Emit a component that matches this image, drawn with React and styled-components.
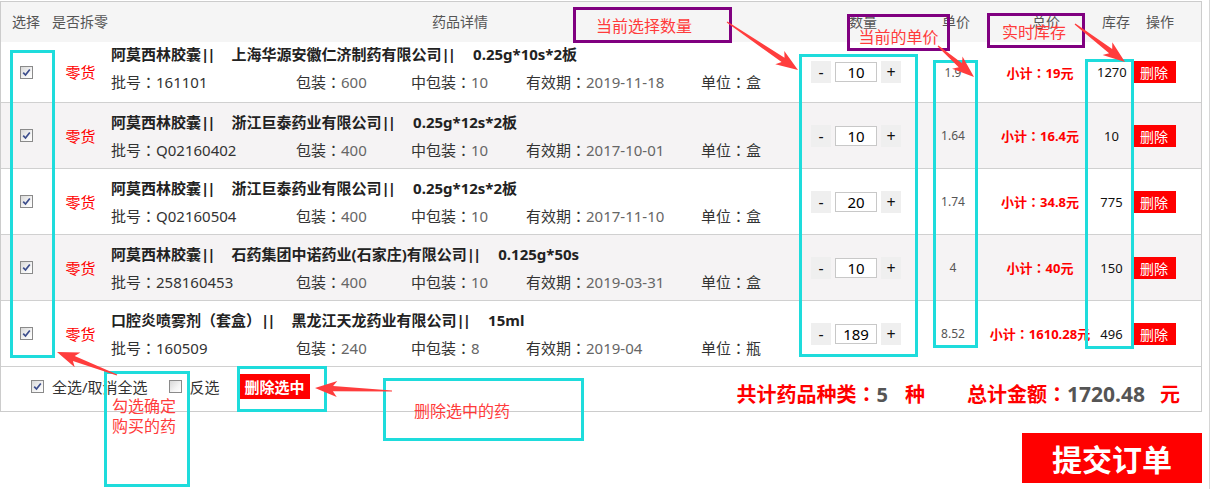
import React from "react";
import styled, { createGlobalStyle } from "styled-components";

const GlobalStyle = createGlobalStyle`
  html, body { margin: 0; padding: 0; background: #fff; }
  body { font-family: "Noto Sans", "Noto Sans CJK SC", sans-serif; color: #333; }
  * { box-sizing: border-box; }
`;

const COLS = "51px 59px 689px 123px 60px 114px 29px 1fr";

const Page = styled.div`
  position: relative;
  width: 1210px;
  height: 489px;
  padding-top: 1px;
  border-right: 1px solid #d6d6d6;
  overflow: hidden;
`;

const Table = styled.div`
  width: 1202px;
  border: 1px solid #cccccc;
`;

const HeaderRow = styled.div`
  display: grid;
  grid-template-columns: ${COLS};
  align-items: center;
  height: 40px;
  background: #f5f5f5;
  font-size: 14px;
  line-height: 20px;
  color: #555;
`;

const HeadCell = styled.div`
  padding-left: ${(p) => p.$pl}px;
  white-space: nowrap;
`;

const Row = styled.div`
  display: grid;
  grid-template-columns: ${COLS};
  align-items: center;
  height: ${(p) => (p.$first ? 61 : 66)}px;
  border-bottom: 1px solid #d0d0d0;
  background: ${(p) => (p.$alt ? "#f5f3f4" : "#ffffff")};
`;

const CheckCell = styled.div`
  display: flex;
  justify-content: center;
`;

const BoxCheck = styled.span`
  display: inline-flex;
  align-items: center;
  justify-content: center;
  width: 13px;
  height: 13px;
  border: 1px solid #8a8a8a;
  background: linear-gradient(135deg, #d8d8d8 0%, #f4f4f4 60%, #ffffff 100%);
  flex: none;
`;

const LooseCell = styled.div`
  text-align: center;
  color: #ff0000;
  font-size: 15px;
  line-height: 20px;
  padding-right: 2px;
`;

const Details = styled.div`
  margin-top: ${(p) => (p.$first ? -8 : 0)}px;
  white-space: nowrap;
`;

const Title = styled.div`
  font-size: 15px;
  line-height: 28px;
  font-weight: 700;
  color: #222;
`;

const Bars = styled.span`
  letter-spacing: -2px;
  margin-right: 2px;
`;

const Sep = styled.span`
  margin-left: ${(p) => p.$gap}px;
`;

/* centred full-width colon, as in the original font */
const Colon = styled.span`
  font-family: "Noto Sans CJK TC", "Noto Sans CJK SC", sans-serif;
`;

const Info = styled.div`
  display: grid;
  grid-template-columns: 185px 115px 115px 175px auto;
  font-size: 15px;
  line-height: 28px;
  color: #333;
`;

const Val = styled.span`
  color: ${(p) => (p.$dark ? "#333" : "#666")};
`;

const QtyCell = styled.div`
  display: flex;
  align-items: center;
  gap: 4px;
  padding-left: 11px;
`;

const StepBtn = styled.span`
  display: flex;
  align-items: center;
  justify-content: center;
  width: 20px;
  height: 22px;
  background: #efefef;
  color: #111;
  font-size: 16px;
  line-height: 1;
`;

const QtyInput = styled.input`
  width: 42px;
  height: 20px;
  padding: 0;
  border: 1px solid #c8c8c8;
  background: #fff;
  text-align: center;
  font-family: "Noto Sans", sans-serif;
  font-size: 15px;
  color: #000;
  outline: none;
`;

const PriceCell = styled.div`
  text-align: center;
  font-size: 12px;
  color: #555;
`;

const SubCell = styled.div`
  text-align: center;
  font-size: 13px;
  font-weight: 700;
  color: #ff0000;
  white-space: nowrap;
`;

const StockCell = styled.div`
  text-align: center;
  font-size: 13px;
  color: #111;
`;

const OpCell = styled.div`
  padding-left: 5px;
`;

const DelBtn = styled.span`
  display: flex;
  align-items: center;
  justify-content: center;
  width: 45px;
  height: 22px;
  background: #ff0000;
  border-left: 1px solid #9a0000;
  color: #fff;
  font-size: 14px;
`;

const Footer = styled.div`
  display: flex;
  align-items: center;
  height: 44px;
  padding: 0 21px 0 30px;
`;

const FootLeft = styled.div`
  display: flex;
  align-items: center;
  margin-top: -6px;
`;

const FootLabel = styled.span`
  margin-left: 8px;
  margin-right: ${(p) => p.$mr}px;
  font-size: 15px;
  color: #333;
  white-space: nowrap;
`;

const DelSelected = styled.span`
  display: flex;
  align-items: center;
  justify-content: center;
  width: 70px;
  height: 25px;
  background: #ff0000;
  color: #fff;
  font-size: 15px;
  font-weight: 700;
`;

const Summary = styled.div`
  display: flex;
  align-items: baseline;
  margin-left: auto;
  margin-top: 8px;
  font-size: 20px;
  font-weight: 700;
  color: #ff0000;
  white-space: nowrap;
`;

const Num = styled.span`
  color: #555;
  font-size: ${(p) => p.$size || 20}px;
`;

const Unit = styled.span`
  margin-left: ${(p) => p.$ml}px;
  margin-right: ${(p) => p.$mr || 0}px;
`;

const SubmitBar = styled.div`
  display: flex;
  justify-content: flex-end;
  width: 1202px;
  margin-top: 21px;
`;

const SubmitBtn = styled.div`
  display: flex;
  align-items: center;
  justify-content: center;
  width: 180px;
  height: 50px;
  background: #ff0000;
  color: #fff;
  font-size: 30px;
  font-weight: 700;
`;

/* ---------- annotation overlay ---------- */
const Overlay = styled.div`
  position: absolute;
  inset: 0;
  pointer-events: none;
`;

const Mark = styled.div`
  position: absolute;
  left: ${(p) => p.$x}px;
  top: ${(p) => p.$y}px;
  width: ${(p) => p.$w}px;
  height: ${(p) => p.$h}px;
  border: 3px solid ${(p) => (p.$purple ? "#800080" : "#1edcdc")};
  display: flex;
  flex-direction: column;
  align-items: ${(p) => (p.$center ? "center" : "flex-start")};
  justify-content: ${(p) => (p.$top ? "flex-start" : "center")};
  padding: ${(p) => p.$pad || "0"};
`;

const Note = styled.div`
  font-family: "Noto Sans CJK SC", sans-serif;
  font-size: 16px;
  line-height: 20px;
  color: #ff3b3b;
  white-space: nowrap;
`;

const ArrowLayer = styled.svg`
  position: absolute;
  left: 0;
  top: 0;
`;

function arrowPoints(x1, y1, x2, y2) {
  const dx = x2 - x1;
  const dy = y2 - y1;
  const len = Math.hypot(dx, dy);
  const ux = dx / len;
  const uy = dy / len;
  const nx = -uy;
  const ny = ux;
  const H = 20;
  const W = 8;
  const bx = x2 - ux * H;
  const by = y2 - uy * H;
  const pts = [
    [x1 + nx * 0.6, y1 + ny * 0.6],
    [bx + ux * 2 + nx * 2.6, by + uy * 2 + ny * 2.6],
    [bx - ux * 2 + nx * W, by - uy * 2 + ny * W],
    [x2, y2],
    [bx - ux * 2 - nx * W, by - uy * 2 - ny * W],
    [bx + ux * 2 - nx * 2.6, by + uy * 2 - ny * 2.6],
    [x1 - nx * 0.6, y1 - ny * 0.6],
  ];
  return pts.map((p) => p.map((v) => v.toFixed(1)).join(",")).join(" ");
}

const ARROWS = [
  [727, 22, 798, 70],
  [938, 46, 974, 77],
  [1075, 24, 1125, 62],
  [117, 375, 57, 352],
  [392, 391, 315, 388],
];

function Checkbox({ checked }) {
  return (
    <BoxCheck>
      {checked && (
        <svg width="9" height="9" viewBox="0 0 9 9">
          <path d="M1.2 4.6 L3.5 7 L7.8 1.5" fill="none" stroke="#3c4d8c" strokeWidth="1.7" />
        </svg>
      )}
    </BoxCheck>
  );
}

const ROWS = [
  { name: "阿莫西林胶囊", co: "上海华源安徽仁济制药有限公司", spec: "0.25g*10s*2板", batch: "161101", pack: "600", mid: "10", exp: "2019-11-18", unit: "盒", qty: "10", price: "1.9", sub: "19", stock: "1270" },
  { name: "阿莫西林胶囊", co: "浙江巨泰药业有限公司", spec: "0.25g*12s*2板", batch: "Q02160402", pack: "400", mid: "10", exp: "2017-10-01", unit: "盒", qty: "10", price: "1.64", sub: "16.4", stock: "10" },
  { name: "阿莫西林胶囊", co: "浙江巨泰药业有限公司", spec: "0.25g*12s*2板", batch: "Q02160504", pack: "400", mid: "10", exp: "2017-11-10", unit: "盒", qty: "20", price: "1.74", sub: "34.8", stock: "775" },
  { name: "阿莫西林胶囊", co: "石药集团中诺药业(石家庄)有限公司", spec: "0.125g*50s", batch: "258160453", pack: "400", mid: "10", exp: "2019-03-31", unit: "盒", qty: "10", price: "4", sub: "40", stock: "150" },
  { name: "口腔炎喷雾剂（套盒）", co: "黑龙江天龙药业有限公司", spec: "15ml", batch: "160509", pack: "240", mid: "8", exp: "2019-04", unit: "瓶", qty: "189", price: "8.52", sub: "1610.28", stock: "496" },
];

export default function App() {
  return (
    <Page>
      <GlobalStyle />
      <Table>
        <HeaderRow>
          <HeadCell $pl={11}>选择</HeadCell>
          <HeadCell $pl={0}>是否拆零</HeadCell>
          <HeadCell $pl={321}>药品详情</HeadCell>
          <HeadCell $pl={49}>数量</HeadCell>
          <HeadCell $pl={19}>单价</HeadCell>
          <HeadCell $pl={49}>总价</HeadCell>
          <HeadCell $pl={5}>库存</HeadCell>
          <HeadCell $pl={20}>操作</HeadCell>
        </HeaderRow>
        {ROWS.map((r, i) => (
          <Row key={i} $first={i === 0} $alt={i % 2 === 1}>
            <CheckCell>
              <Checkbox checked />
            </CheckCell>
            <LooseCell>零货</LooseCell>
            <Details $first={i === 0}>
              <Title>
                {r.name}<Bars>||</Bars>
                <Sep $gap={16}>{r.co}<Bars>||</Bars></Sep>
                <Sep $gap={17}>{r.spec}</Sep>
              </Title>
              <Info>
                <span>批号<Colon>：</Colon><Val $dark>{r.batch}</Val></span>
                <span>包装<Colon>：</Colon><Val>{r.pack}</Val></span>
                <span>中包装<Colon>：</Colon><Val>{r.mid}</Val></span>
                <span>有效期<Colon>：</Colon><Val>{r.exp}</Val></span>
                <span>单位<Colon>：</Colon>{r.unit}</span>
              </Info>
            </Details>
            <QtyCell>
              <StepBtn>-</StepBtn>
              <QtyInput defaultValue={r.qty} readOnly />
              <StepBtn>+</StepBtn>
            </QtyCell>
            <PriceCell>{r.price}</PriceCell>
            <SubCell>小计<Colon>：</Colon>{r.sub}元</SubCell>
            <StockCell>{r.stock}</StockCell>
            <OpCell>
              <DelBtn>删除</DelBtn>
            </OpCell>
          </Row>
        ))}
        <Footer>
          <FootLeft>
            <Checkbox checked />
            <FootLabel $mr={21}>全选/取消全选</FootLabel>
            <Checkbox />
            <FootLabel $mr={20}>反选</FootLabel>
            <DelSelected>删除选中</DelSelected>
          </FootLeft>
          <Summary>
            共计药品种类<Colon>：</Colon><Num>5</Num>
            <Unit $ml={17} $mr={42}>种</Unit>
            总计金额<Colon>：</Colon><Num $size={21}>1720.48</Num>
            <Unit $ml={15}>元</Unit>
          </Summary>
        </Footer>
      </Table>
      <SubmitBar>
        <SubmitBtn>提交订单</SubmitBtn>
      </SubmitBar>

      <Overlay>
        <Mark $x={10} $y={50} $w={45} $h={308} />
        <Mark $x={799} $y={54} $w={119} $h={303} />
        <Mark $x={933} $y={60} $w={45} $h={288} />
        <Mark $x={1085} $y={59} $w={49} $h={290} />
        <Mark $x={237} $y={366} $w={90} $h={46} />
        <Mark $x={104} $y={371} $w={86} $h={116} $top $pad="21px 0 0 5px">
          <Note>勾选确定</Note>
          <Note>购买的药</Note>
        </Mark>
        <Mark $x={383} $y={378} $w={201} $h={63} $pad="0 0 0 28px">
          <Note>删除选中的药</Note>
        </Mark>
        <Mark $purple $x={573} $y={7} $w={159} $h={36} $pad="0 0 0 20px">
          <Note>当前选择数量</Note>
        </Mark>
        <Mark $purple $center $x={847} $y={14} $w={103} $h={37} $pad="7px 0 0 0">
          <Note>当前的单价</Note>
        </Mark>
        <Mark $purple $x={987} $y={13} $w={98} $h={35} $pad="0 0 0 12px">
          <Note>实时库存</Note>
        </Mark>
        <ArrowLayer width="1215" height="489" viewBox="0 0 1215 489">
          {ARROWS.map((a, i) => (
            <polygon key={i} points={arrowPoints(...a)} fill="#ff3d3d" />
          ))}
        </ArrowLayer>
      </Overlay>
    </Page>
  );
}
